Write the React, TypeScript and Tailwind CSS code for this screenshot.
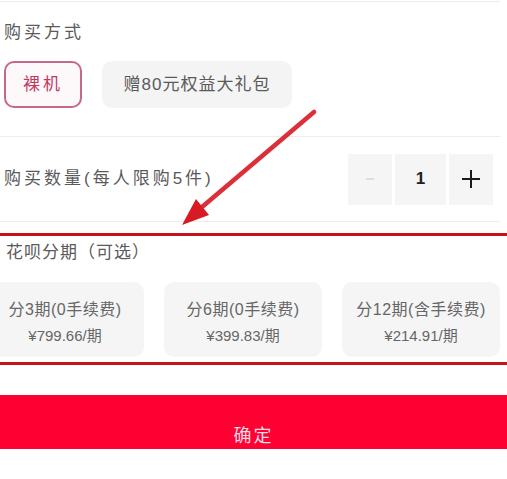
const plans = [
  { title: '分3期(0手续费)', price: '¥799.66/期' },
  { title: '分6期(0手续费)', price: '¥399.83/期' },
  { title: '分12期(含手续费)', price: '¥214.91/期' }
];

export default function App() {
  return (
    <div className="relative h-[479px] w-[507px] overflow-hidden bg-white font-['Liberation_Sans','Noto_Sans_CJK_SC',sans-serif] text-[#5a5a5a]">
      <div className="mt-px h-px w-[500px] bg-[#ededed]" />

      {/* 购买方式 */}
      <div className="pl-[4px] pt-[19px] text-[17px] leading-[24px] tracking-[3px]">购买方式</div>
      <div className="mt-[16px] flex gap-[20px] pl-[4px]">
        <button className="flex h-[47px] w-[78px] items-center justify-center rounded-[10px] border-2 border-[#c4698a] bg-[#fdf8fa] text-[17px] tracking-[3px] text-[#c2385f]">
          裸机
        </button>
        <button className="flex h-[47px] w-[190px] items-center justify-center rounded-[10px] bg-[#f4f4f4] text-[17px] tracking-[1px] text-[#5a5a5a]">
          赠80元权益大礼包
        </button>
      </div>
      <div className="mt-[28px] h-px w-[500px] bg-[#ededed]" />

      {/* 购买数量 */}
      <div className="flex h-[84px] items-center justify-between pl-[4px] pr-[14px]">
        <span className="text-[17px] tracking-[3px]">购买数量(每人限购5件)</span>
        <Stepper />
      </div>
      <div className="h-px w-[500px] bg-[#ededed]" />

      {/* 花呗分期 */}
      <div className="mt-[11px] border-y-[3px] border-[#c3141c] pb-[5px] pt-[5px]">
        <div className="pl-[6px] text-[17px] leading-[24px] tracking-[1px]">花呗分期（可选）</div>
        <div className="-ml-[14px] mt-[17px] flex gap-[20px]">
          {plans.map((plan) => (
            <div
              key={plan.title}
              className="flex h-[75px] w-[158px] shrink-0 flex-col items-center justify-center gap-[4px] rounded-[10px] bg-[#f5f5f5] pt-[6px] text-[#666]"
            >
              <span className="text-[16px] leading-[22px] tracking-[0.5px]">{plan.title}</span>
              <span className="text-[15px] leading-[22px]">{plan.price}</span>
            </div>
          ))}
        </div>
      </div>

      <button className="mt-[30px] flex h-[54px] w-full items-end justify-center bg-[#ff0033] text-[18px] leading-[26px] tracking-[2px] text-[#f6dbe3]">
        确定
      </button>

      <Arrow />
    </div>
  );
}

function Stepper() {
  return (
    <div className="flex h-[51px] gap-[3px]">
      <div className="flex w-[44px] items-center justify-center bg-[#f5f5f5]">
        <svg width="10" height="4" viewBox="0 0 10 4">
          <line x1="1" y1="2" x2="9" y2="2" stroke="#d4d4d4" strokeWidth="1.5" />
        </svg>
      </div>
      <div className="flex w-[51px] items-center justify-center bg-[#f5f5f5] text-[17px] font-bold text-[#222]">1</div>
      <div className="flex w-[44px] items-center justify-center bg-[#f5f5f5]">
        <svg width="18" height="18" viewBox="0 0 18 18">
          <line x1="0" y1="9" x2="18" y2="9" stroke="#1a1a1a" strokeWidth="2" />
          <line x1="9" y1="0" x2="9" y2="18" stroke="#1a1a1a" strokeWidth="2" />
        </svg>
      </div>
    </div>
  );
}

function Arrow() {
  return (
    <svg className="pointer-events-none absolute left-0 top-0" width="507" height="479">
      <line x1="314" y1="112" x2="202" y2="207" stroke="#d81a24" strokeWidth="4.5" strokeLinecap="round" opacity="0.9" />
      <polygon points="182,225 196,199 209,215" fill="#d81a24" />
    </svg>
  );
}
